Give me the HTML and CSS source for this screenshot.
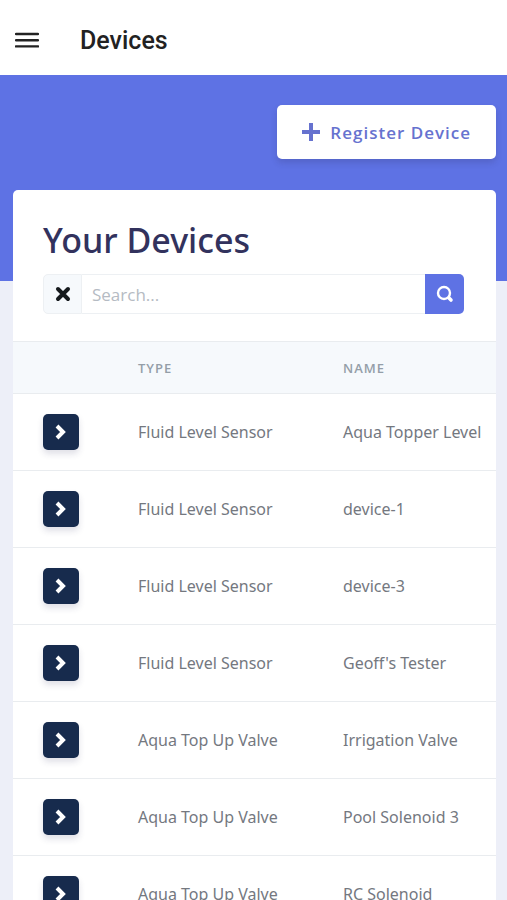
FILE: index.html
```html
<!DOCTYPE html>
<html lang="en">
<head>
<meta charset="utf-8">
<meta name="viewport" content="width=device-width, initial-scale=1">
<title>Devices</title>
<link rel="stylesheet" href="styles.css">
</head>
<body>
<svg class="sprite" aria-hidden="true">
	<symbol id="chevron" viewBox="0 0 12 16">
		<path d="M2 2l6 6-6 6" fill="none" stroke="currentColor" stroke-width="4"/>
	</symbol>
</svg>
<header class="topbar">
	<button type="button" class="menu-btn" aria-label="Menu">
		<svg width="24" height="18" viewBox="0 0 24 18"><path d="M1 2h22M1 8.200h22M1 14.400h22" stroke="currentColor" stroke-width="2.400" stroke-linecap="round"/></svg>
	</button>
	<h1>Devices</h1>
</header>
<main>
	<div class="hero">
		<a href="#register" class="register-btn">
			<svg width="18" height="18" viewBox="0 0 18 18"><path d="M9 0v18M0 9h18" stroke="currentColor" stroke-width="4"/></svg>
			Register Device
		</a>
	</div>
	<section class="card">
		<div class="card-header">
			<h2>Your Devices</h2>
			<form class="search" role="search">
				<button type="button" class="clear-btn" aria-label="Clear search">
					<svg width="16" height="16" viewBox="0 0 16 16"><path d="M3 3l10 10M13 3L3 13" stroke="currentColor" stroke-width="4" stroke-linecap="round"/></svg>
				</button>
				<input type="text" placeholder="Search..." aria-label="Search devices">
				<button type="submit" class="search-btn" aria-label="Search">
					<svg width="18" height="18" viewBox="0 0 18 18" fill="none" stroke="currentColor"><circle cx="8" cy="8" r="6" stroke-width="2.400"/><path d="M13 13l2 2" stroke-width="3.600" stroke-linecap="round"/></svg>
				</button>
			</form>
		</div>
		<div class="table-wrap">
			<table>
				<thead>
					<tr><th class="col-open" aria-label="Open"></th><th class="col-type" scope="col">Type</th><th scope="col">Name</th></tr>
				</thead>
				<tbody>
					<tr>
						<td><a href="#device" class="open-btn" aria-label="Open"><svg width="12" height="16"><use href="#chevron"/></svg></a></td>
						<td>Fluid Level Sensor</td>
						<td>Aqua Topper Level</td>
					</tr>
					<tr>
						<td><a href="#device" class="open-btn" aria-label="Open"><svg width="12" height="16"><use href="#chevron"/></svg></a></td>
						<td>Fluid Level Sensor</td>
						<td>device-1</td>
					</tr>
					<tr>
						<td><a href="#device" class="open-btn" aria-label="Open"><svg width="12" height="16"><use href="#chevron"/></svg></a></td>
						<td>Fluid Level Sensor</td>
						<td>device-3</td>
					</tr>
					<tr>
						<td><a href="#device" class="open-btn" aria-label="Open"><svg width="12" height="16"><use href="#chevron"/></svg></a></td>
						<td>Fluid Level Sensor</td>
						<td>Geoff's Tester</td>
					</tr>
					<tr>
						<td><a href="#device" class="open-btn" aria-label="Open"><svg width="12" height="16"><use href="#chevron"/></svg></a></td>
						<td>Aqua Top Up Valve</td>
						<td>Irrigation Valve</td>
					</tr>
					<tr>
						<td><a href="#device" class="open-btn" aria-label="Open"><svg width="12" height="16"><use href="#chevron"/></svg></a></td>
						<td>Aqua Top Up Valve</td>
						<td>Pool Solenoid 3</td>
					</tr>
					<tr>
						<td><a href="#device" class="open-btn" aria-label="Open"><svg width="12" height="16"><use href="#chevron"/></svg></a></td>
						<td>Aqua Top Up Valve</td>
						<td>RC Solenoid</td>
					</tr>
				</tbody>
			</table>
		</div>
	</section>
</main>
</body>
</html>
```
FILE: styles.css
```css
*{ box-sizing:border-box;}
body{ margin:0; height:100vh; display:flex; flex-direction:column; overflow:hidden; background:#edeff8; color:#74787f; font-family:"Open Sans","Noto Sans",sans-serif; font-size:17px;}
h1,h2{ margin:0;}
button,input{ margin:0; padding:0; border:0; background:none; font:inherit; color:inherit;}
button{ display:flex; align-items:center; justify-content:center; cursor:pointer;}
a{ text-decoration:none;}
.sprite{ display:none;}

.topbar{ flex:none; display:flex; align-items:center; gap:41px; height:75px; padding:6px 15px 0; background:#fff; color:#222;}
.topbar h1{ font-family:Roboto,sans-serif; font-size:25px; font-weight:500; line-height:30px;}

main{ flex:1; overflow-y:auto; scrollbar-width:none;}
.hero{ display:flex; justify-content:flex-end; padding:30px 11px 122px; background:#5e72e4;}
.register-btn{ display:flex; align-items:center; gap:10px; height:54px; padding:0 25px; border-radius:5px; background:#fff; color:#6672cf; font-weight:600; letter-spacing:1px; box-shadow:0 4px 6px rgba(50,50,93,.2);}

.card{ margin:-91px 11px 0 13px; border-radius:5px; background:#fff; overflow:hidden; position:relative;}
.card-header{ padding:28px 32px 27px 30px;}
.card h2{ color:#32325d; font-family:"Noto Sans",sans-serif; font-size:34px; font-weight:500; line-height:44px;}
.search{ display:flex; height:40px; margin-top:12px;}
.clear-btn{ width:39px; border:1px solid #edf0f3; border-radius:5px 0 0 5px; background:#f6f9fc; color:#15191c;}
.search input{ flex:1; min-width:0; padding:0 10px; border:1px solid #edf0f3; border-width:1px 0;}
.search input::placeholder{ color:#b5bbc3; opacity:1;}
.search-btn{ width:39px; border-radius:0 5px 5px 0; background:#5e72e4; color:#fff;}

.table-wrap{ overflow-x:auto; scrollbar-width:none;}
table{ width:100%; min-width:506px; border-spacing:0; table-layout:fixed; white-space:nowrap;}
th{ height:53px; padding:0 30px; border-top:1px solid #e9ecef; border-bottom:1px solid #e9ecef; background:#f6f9fc; color:#949ea8; font-size:13px; font-weight:600; letter-spacing:1px; text-align:left; text-transform:uppercase;}
td{ padding:20px 30px; border-bottom:1px solid #e9ecef; font-family:"Noto Sans",sans-serif; font-size:16px;}
th:first-child,td:first-child{ padding-right:0;}
.col-open{ width:95px;}
.col-type{ width:205px;}
.open-btn{ display:flex; align-items:center; justify-content:center; width:36px; height:36px; border-radius:5px; background:#172b4d; color:#fff; box-shadow:0 4px 6px rgba(50,50,93,.15);}
```
